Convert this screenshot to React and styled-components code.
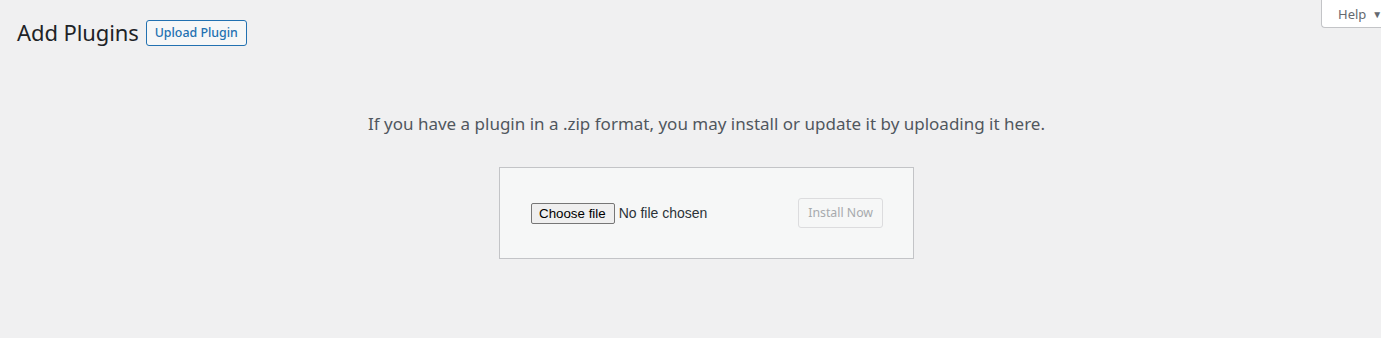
import React from 'react';
import styled, { createGlobalStyle } from 'styled-components';

const GlobalStyle = createGlobalStyle`
  html, body {
    margin: 0;
    padding: 0;
    background: #f0f0f1;
    color: #1d2327;
    font-family: "Noto Sans", "Open Sans", sans-serif;
    font-size: 13px;
  }
`;

const Page = styled.div`
  position: relative;
  min-height: 338px;
`;

const HelpTab = styled.button`
  position: absolute;
  top: 0;
  right: 0;
  height: 28px;
  width: 60px;
  box-sizing: border-box;
  padding: 0 0 0 16px;
  display: flex;
  align-items: center;
  gap: 6px;
  background: #fff;
  border: 1px solid #c3c4c7;
  border-top: none;
  border-right: none;
  border-radius: 0 0 0 4px;
  color: #646970;
  font-family: inherit;
  font-size: 13px;
  cursor: pointer;
`;

const Caret = styled.span`
  font-size: 10px;
  color: #646970;
`;

const Header = styled.div`
  display: flex;
  align-items: center;
  gap: 7px;
  padding: 17px 0 0 17px;
`;

const Title = styled.h1`
  margin: 0;
  font-size: 22px;
  font-weight: 400;
  line-height: 31px;
  color: #1d2327;
  letter-spacing: -0.1px;
`;

const OutlineButton = styled.button`
  height: 26px;
  box-sizing: border-box;
  padding: 0 8px;
  border: 1px solid #2271b1;
  border-radius: 3px;
  background: #f6f7f7;
  color: #2271b1;
  font-family: inherit;
  font-size: 12.4px;
  font-weight: 500;
  cursor: pointer;
`;

const UploadArea = styled.div`
  padding-left: 32px;
  display: flex;
  flex-direction: column;
  align-items: center;
`;

const Help = styled.p`
  margin: 0;
  padding-top: 64px;
  font-size: 17px;
  color: #50575e;
`;

const Form = styled.div`
  margin-top: 32px;
  width: 415px;
  height: 92px;
  box-sizing: border-box;
  padding: 0 30px;
  display: flex;
  align-items: center;
  justify-content: space-between;
  background: #f6f7f7;
  border: 1px solid #c3c4c7;
`;

const FilePick = styled.div`
  display: flex;
  align-items: center;
  gap: 4px;
  font-family: "Liberation Sans", Arial, sans-serif;
  font-size: 13.33px;
  color: #1d2327;
`;

const ChooseButton = styled.button`
  height: 21px;
  box-sizing: border-box;
  padding: 0 8px 0 7px;
  border: 1px solid #767676;
  border-radius: 2px;
  background: #efefef;
  color: #000;
  font-family: inherit;
  font-size: 13.33px;
  margin-left: 1px;
`;

const FileName = styled.span`
  font-size: 14px;
  color: #2c3338;
`;

const InstallButton = styled.button`
  height: 30px;
  box-sizing: border-box;
  padding: 0 9px;
  border: 1px solid #dcdcde;
  border-radius: 3px;
  background: #f6f7f7;
  color: #a7aaad;
  font-family: inherit;
  font-size: 12.3px;
  margin-top: -1px;
`;

export default function App() {
  return (
    <Page>
      <GlobalStyle />
      <HelpTab>
        Help <Caret>▼</Caret>
      </HelpTab>
      <Header>
        <Title>Add Plugins</Title>
        <OutlineButton>Upload Plugin</OutlineButton>
      </Header>
      <UploadArea>
        <Help>If you have a plugin in a .zip format, you may install or update it by uploading it here.</Help>
        <Form>
          <FilePick>
            <ChooseButton>Choose file</ChooseButton>
            <FileName>No file chosen</FileName>
          </FilePick>
          <InstallButton disabled>Install Now</InstallButton>
        </Form>
      </UploadArea>
    </Page>
  );
}
